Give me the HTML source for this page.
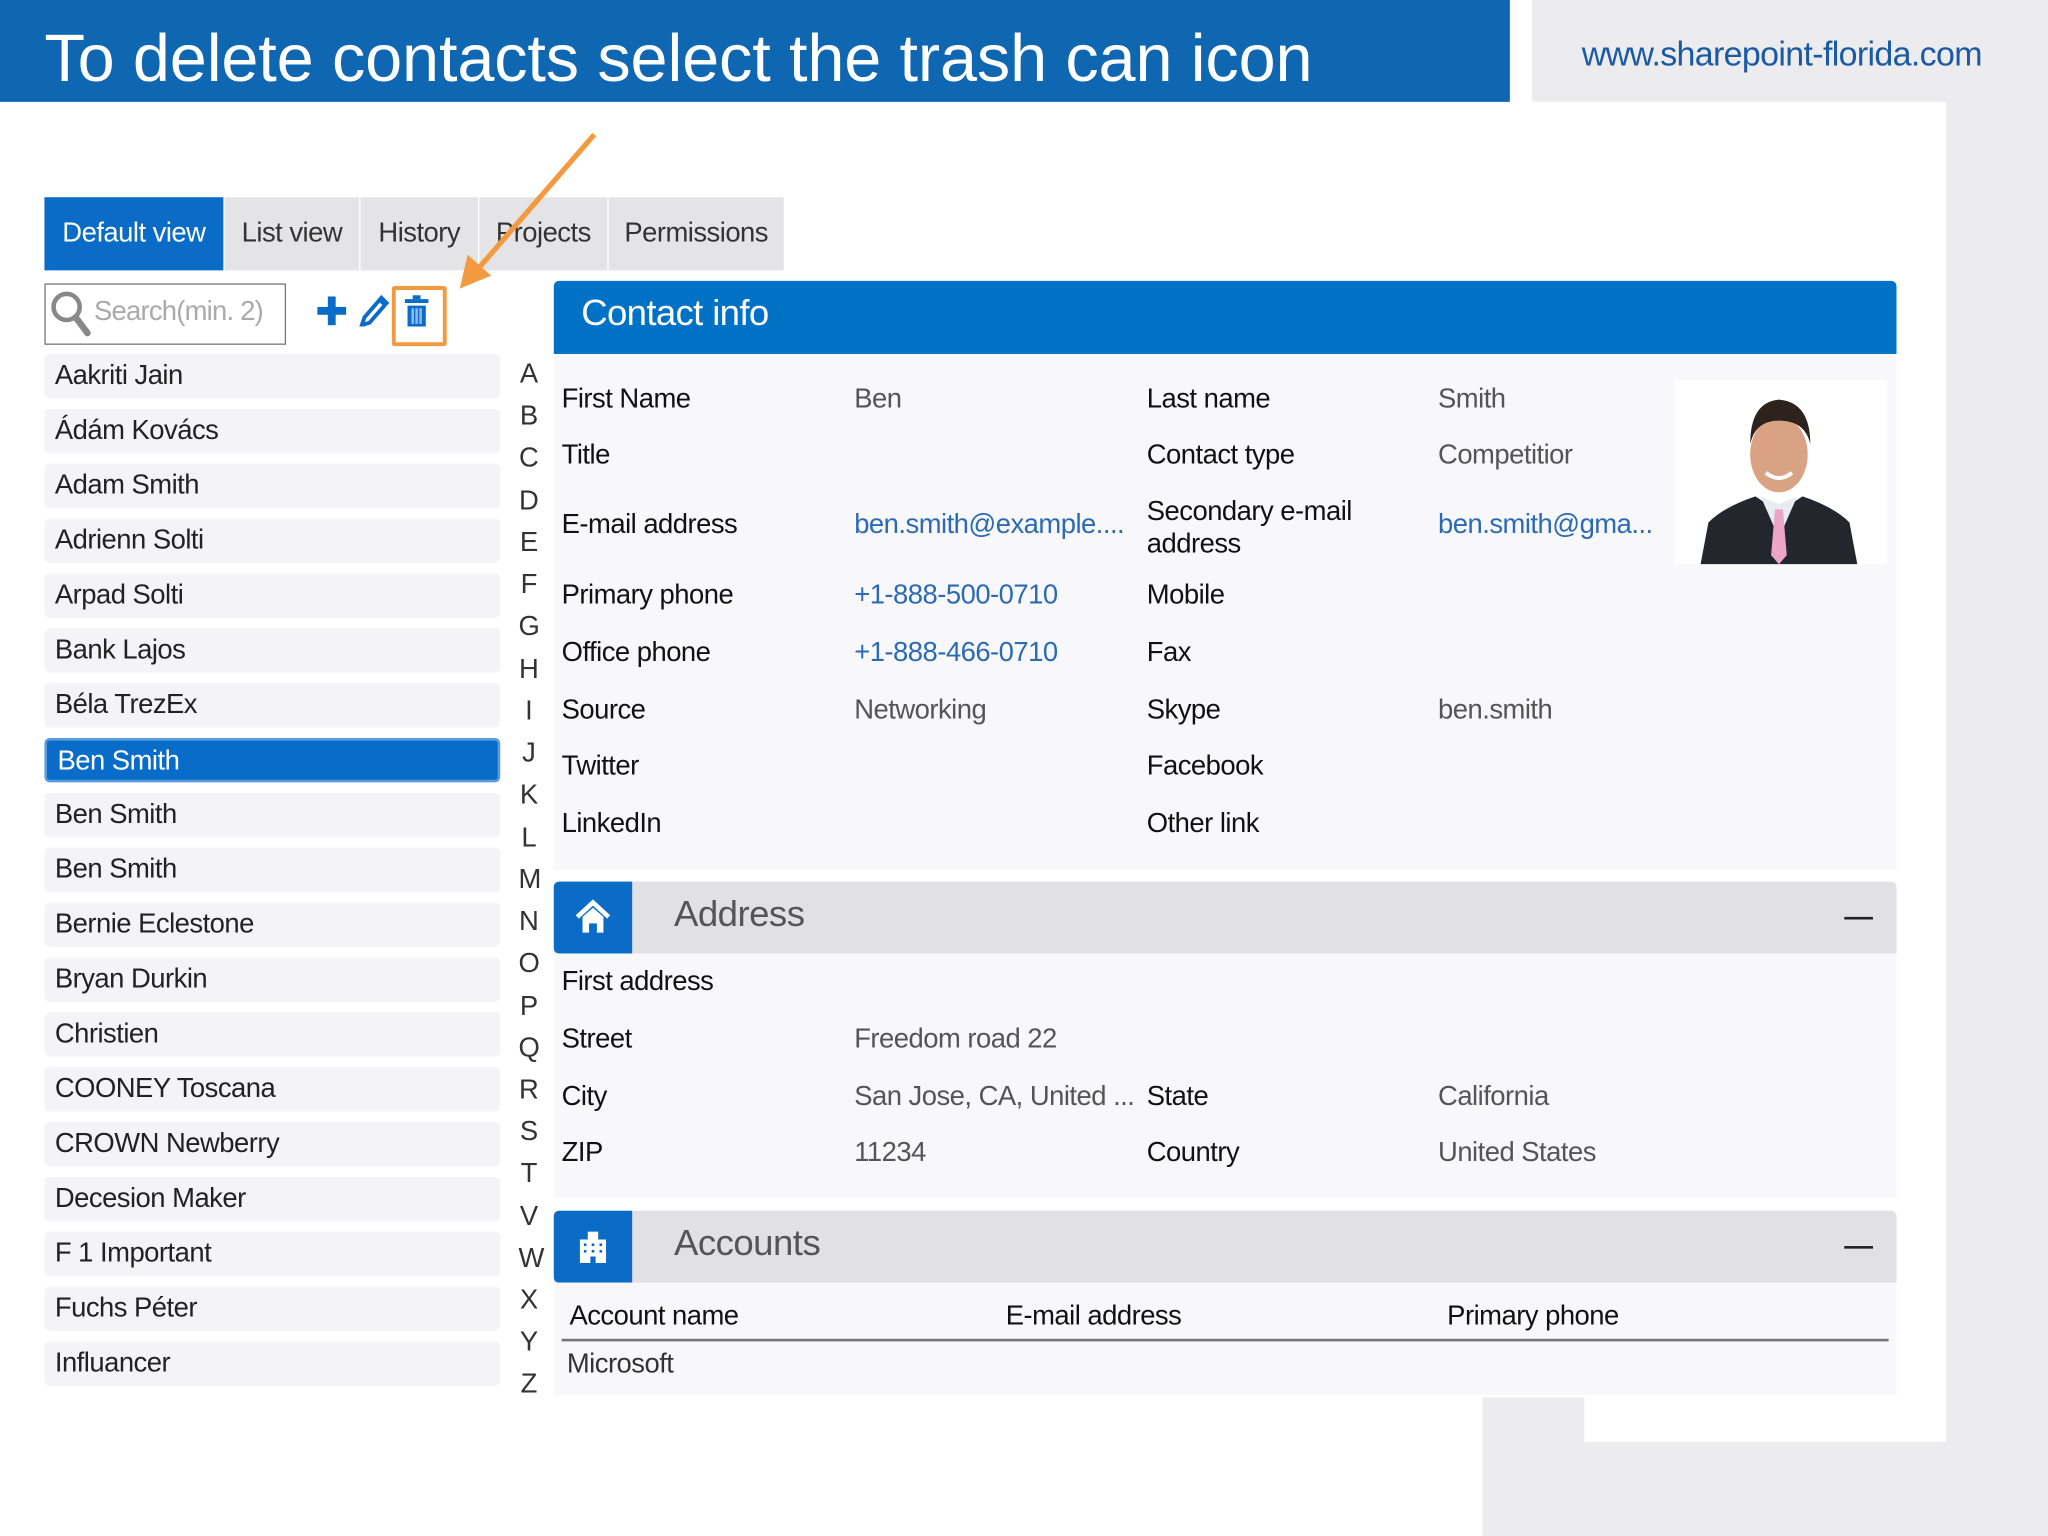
<!DOCTYPE html>
<html><head><meta charset="utf-8"><style>
html,body{margin:0;padding:0;width:2048px;height:1536px;overflow:hidden;background:#fff}
#s{position:absolute;left:0;top:0;width:1568px;height:1176px;transform:scale(1.30612);transform-origin:0 0;font-family:"Liberation Sans",sans-serif;color:#222}
.a{position:absolute;white-space:nowrap}
.tab{position:absolute;top:151px;height:56px;background:#e4e4e6;font-size:21px;letter-spacing:-0.4px;line-height:56px;text-align:center;color:#333}
.li{position:absolute;left:34px;width:349px;height:34px;background:#f4f4f6;border-radius:4px;font-size:21px;letter-spacing:-0.4px;line-height:34px;padding-left:8px;box-sizing:border-box;color:#222}
.lt{position:absolute;left:397px;width:16px;text-align:center;font-size:21px;color:#333}
.lb{font-size:21px;letter-spacing:-0.4px;color:#111}
.v{font-size:21px;letter-spacing:-0.4px;color:#555}
.lk{color:#2d6ab4}
</style></head><body><div id="s">
<div class="a" style="left:1173px;top:0;width:395px;height:78px;background:#ececee"></div>
<div class="a" style="left:1490px;top:0;width:78px;height:1176px;background:#ececee"></div>
<div class="a" style="left:1135px;top:1070px;width:433px;height:106px;background:#ececee"></div>
<div class="a" style="left:1213px;top:1070px;width:277px;height:34px;background:#fff"></div>
<div class="a" style="left:0;top:0;width:1156px;height:78px;background:#0f67b1"></div>
<div class="a" style="left:34px;top:12px;font-size:51px;color:#fff;letter-spacing:-0.1px;line-height:66px">To delete contacts select the trash can icon</div>
<div class="a" style="left:1211px;top:26px;font-size:26px;color:#1b5aa3;letter-spacing:-0.5px">www.sharepoint-florida.com</div>
<div class="tab" style="left:34px;width:137px;background:#0a6cc6;color:#fff">Default view</div>
<div class="tab" style="left:172px;width:103px">List view</div>
<div class="tab" style="left:276px;width:90px">History</div>
<div class="tab" style="left:367px;width:98px">Projects</div>
<div class="tab" style="left:466px;width:134px">Permissions</div>
<div class="a" style="left:34px;top:217px;width:183px;height:45px;border:1.5px solid #777;background:#fff"></div>
<svg class="a" style="left:37px;top:220px" width="34" height="40" viewBox="0 0 34 40"><circle cx="14" cy="15" r="10" fill="none" stroke="#888" stroke-width="3.5"/><line x1="21" y1="23" x2="30" y2="35" stroke="#888" stroke-width="5" stroke-linecap="round"/></svg>
<div class="a" style="left:72px;top:227px;font-size:21px;color:#aaa;letter-spacing:-0.6px">Search(min. 2)</div>
<svg class="a" style="left:242px;top:226px" width="24" height="24"><rect x="9" y="1" width="6" height="22" fill="#0a6cc6"/><rect x="1" y="9" width="22" height="6" fill="#0a6cc6"/></svg>
<svg class="a" style="left:275px;top:224px" width="24" height="26" viewBox="0 0 24 26"><path d="M4 19 L17 4 L21 8 L8 23 L2 25 Z" fill="none" stroke="#0a6cc6" stroke-width="3"/><path d="M16 5 L20 9" stroke="#0a6cc6" stroke-width="4"/></svg>
<div class="a" style="left:300px;top:219px;width:36px;height:40px;border:3px solid #f39a41;border-radius:2px"></div>
<svg class="a" style="left:308px;top:226px" width="22" height="26" viewBox="0 0 22 26"><rect x="8" y="0" width="6" height="3" fill="#0a6cc6"/><rect x="2" y="3" width="18" height="3" fill="#0a6cc6"/><rect x="4" y="8" width="14" height="16" fill="#0a6cc6"/><rect x="7" y="10" width="2" height="12" fill="#8fb6e6"/><rect x="10" y="10" width="2" height="12" fill="#8fb6e6"/><rect x="13" y="10" width="2" height="12" fill="#8fb6e6"/></svg>
<svg class="a" style="left:340px;top:95px" width="130" height="135" viewBox="0 0 130 135"><line x1="115" y1="8" x2="25" y2="112" stroke="#f39a41" stroke-width="4"/><polygon points="12,126 18,100 36,116" fill="#f39a41"/></svg>
<div class="li" style="top:271px">Aakriti Jain</div>
<div class="li" style="top:313px">Ádám Kovács</div>
<div class="li" style="top:355px">Adam Smith</div>
<div class="li" style="top:397px">Adrienn Solti</div>
<div class="li" style="top:439px">Arpad Solti</div>
<div class="li" style="top:481px">Bank Lajos</div>
<div class="li" style="top:523px">Béla TrezEx</div>
<div class="li" style="top:565px;background:#0a6cc9;color:#fff;border:2px solid #5b9be0;line-height:32px">Ben Smith</div>
<div class="li" style="top:607px">Ben Smith</div>
<div class="li" style="top:649px">Ben Smith</div>
<div class="li" style="top:691px">Bernie Eclestone</div>
<div class="li" style="top:733px">Bryan Durkin</div>
<div class="li" style="top:775px">Christien</div>
<div class="li" style="top:817px">COONEY Toscana</div>
<div class="li" style="top:859px">CROWN Newberry</div>
<div class="li" style="top:901px">Decesion Maker</div>
<div class="li" style="top:943px">F 1 Important</div>
<div class="li" style="top:985px">Fuchs Péter</div>
<div class="li" style="top:1027px">Influancer</div>
<div class="lt" style="top:275px">A</div><div class="lt" style="top:307px">B</div><div class="lt" style="top:339px">C</div><div class="lt" style="top:372px">D</div><div class="lt" style="top:404px">E</div><div class="lt" style="top:436px">F</div><div class="lt" style="top:468px">G</div><div class="lt" style="top:501px">H</div><div class="lt" style="top:533px">I</div><div class="lt" style="top:565px">J</div><div class="lt" style="top:597px">K</div><div class="lt" style="top:630px">L</div><div class="lt" style="top:662px">M</div><div class="lt" style="top:694px">N</div><div class="lt" style="top:726px">O</div><div class="lt" style="top:759px">P</div><div class="lt" style="top:791px">Q</div><div class="lt" style="top:823px">R</div><div class="lt" style="top:855px">S</div><div class="lt" style="top:887px">T</div><div class="lt" style="top:920px">V</div><div class="lt" style="top:952px">W</div><div class="lt" style="top:984px">X</div><div class="lt" style="top:1016px">Y</div><div class="lt" style="top:1048px">Z</div>
<div class="a" style="left:424px;top:215px;width:1028px;height:56px;background:#0072c6;border-radius:4px 4px 0 0"></div>
<div class="a" style="left:445px;top:224px;font-size:28px;color:#fff;letter-spacing:-0.5px">Contact info</div>
<div class="a" style="left:424px;top:271px;width:1028px;height:395px;background:#f8f8fa"></div>
<div class="a" style="left:1282px;top:291px;width:163px;height:141px;background:#fff"></div>
<svg class="a" style="left:1300px;top:300px" width="124" height="132" viewBox="0 0 124 132"><path d="M2 132 L8 100 Q20 88 44 80 L62 92 L80 80 Q104 88 116 100 L122 132 Z" fill="#23262d"/><path d="M48 80 L62 112 L76 80 L62 86 Z" fill="#e6ecf2"/><path d="M59 90 L65 90 L68 125 L62 132 L56 125 Z" fill="#eaa5c8"/><ellipse cx="62" cy="48" rx="22" ry="29" fill="#d9a282"/><path d="M40 40 Q40 8 62 6 Q86 8 86 40 Q82 22 62 22 Q44 22 40 40 Z" fill="#2e221c"/><path d="M52 62 Q62 70 72 62" stroke="#fff" stroke-width="3" fill="none"/></svg>
<div class="a lb" style="left:430px;top:294px">First Name</div><div class="a v" style="left:654px;top:294px">Ben</div><div class="a lb" style="left:878px;top:294px">Last name</div><div class="a v" style="left:1101px;top:294px">Smith</div>
<div class="a lb" style="left:430px;top:337px">Title</div><div class="a lb" style="left:878px;top:337px">Contact type</div><div class="a v" style="left:1101px;top:337px">Competitior</div>
<div class="a lb" style="left:430px;top:390px">E-mail address</div><div class="a v lk" style="left:654px;top:390px">ben.smith@example....</div><div class="a lb" style="left:878px;top:379px;line-height:25px">Secondary e-mail<br>address</div><div class="a v lk" style="left:1101px;top:390px">ben.smith@gma...</div>
<div class="a lb" style="left:430px;top:444px">Primary phone</div><div class="a v lk" style="left:654px;top:444px">+1-888-500-0710</div><div class="a lb" style="left:878px;top:444px">Mobile</div>
<div class="a lb" style="left:430px;top:488px">Office phone</div><div class="a v lk" style="left:654px;top:488px">+1-888-466-0710</div><div class="a lb" style="left:878px;top:488px">Fax</div>
<div class="a lb" style="left:430px;top:532px">Source</div><div class="a v" style="left:654px;top:532px">Networking</div><div class="a lb" style="left:878px;top:532px">Skype</div><div class="a v" style="left:1101px;top:532px">ben.smith</div>
<div class="a lb" style="left:430px;top:575px">Twitter</div><div class="a lb" style="left:878px;top:575px">Facebook</div>
<div class="a lb" style="left:430px;top:619px">LinkedIn</div><div class="a lb" style="left:878px;top:619px">Other link</div>
<div class="a" style="left:424px;top:675px;width:1028px;height:55px;background:#e1e1e3;border-radius:4px 4px 0 0"></div>
<div class="a" style="left:424px;top:675px;width:60px;height:55px;background:#0a6cc6;border-radius:4px 0 0 4px"></div>
<svg class="a" style="left:440px;top:688px" width="28" height="28" viewBox="0 0 28 28"><path d="M2 14 L14 3 L26 14" fill="none" stroke="#fff" stroke-width="3.5"/><path d="M6 14 L14 7 L22 14 L22 26 L17 26 L17 19 L11 19 L11 26 L6 26 Z" fill="#fff"/></svg>
<div class="a" style="left:516px;top:684px;font-size:28px;color:#555;letter-spacing:-0.4px">Address</div>
<div class="a" style="left:1412px;top:702px;width:22px;height:2px;background:#222"></div>
<div class="a" style="left:424px;top:730px;width:1028px;height:187px;background:#f8f8fa"></div>
<div class="a lb" style="left:430px;top:740px">First address</div>
<div class="a lb" style="left:430px;top:784px">Street</div><div class="a v" style="left:654px;top:784px">Freedom road 22</div>
<div class="a lb" style="left:430px;top:828px">City</div><div class="a v" style="left:654px;top:828px">San Jose, CA, United ...</div><div class="a lb" style="left:878px;top:828px">State</div><div class="a v" style="left:1101px;top:828px">California</div>
<div class="a lb" style="left:430px;top:871px">ZIP</div><div class="a v" style="left:654px;top:871px">11234</div><div class="a lb" style="left:878px;top:871px">Country</div><div class="a v" style="left:1101px;top:871px">United States</div>
<div class="a" style="left:424px;top:927px;width:1028px;height:55px;background:#e1e1e3;border-radius:4px 4px 0 0"></div>
<div class="a" style="left:424px;top:927px;width:60px;height:55px;background:#0a6cc6;border-radius:4px 0 0 4px"></div>
<svg class="a" style="left:442px;top:941px" width="24" height="26" viewBox="0 0 24 26"><rect x="8" y="2" width="8" height="6" fill="#fff"/><rect x="2" y="8" width="20" height="18" fill="#fff"/><g fill="#0a6cc6"><rect x="5" y="11" width="2" height="2"/><rect x="11" y="11" width="2" height="2"/><rect x="17" y="11" width="2" height="2"/><rect x="5" y="16" width="2" height="2"/><rect x="11" y="16" width="2" height="2"/><rect x="17" y="16" width="2" height="2"/><rect x="10" y="21" width="4" height="5"/></g></svg>
<div class="a" style="left:516px;top:936px;font-size:28px;color:#555;letter-spacing:-0.4px">Accounts</div>
<div class="a" style="left:1412px;top:954px;width:22px;height:2px;background:#222"></div>
<div class="a" style="left:424px;top:982px;width:1028px;height:86px;background:#f8f8fa"></div>
<div class="a lb" style="left:436px;top:996px">Account name</div><div class="a lb" style="left:770px;top:996px">E-mail address</div><div class="a lb" style="left:1108px;top:996px">Primary phone</div>
<div class="a" style="left:430px;top:1025px;width:1016px;height:1.5px;background:#777"></div>
<div class="a v" style="left:434px;top:1033px;color:#333">Microsoft</div>
</div></body></html>
